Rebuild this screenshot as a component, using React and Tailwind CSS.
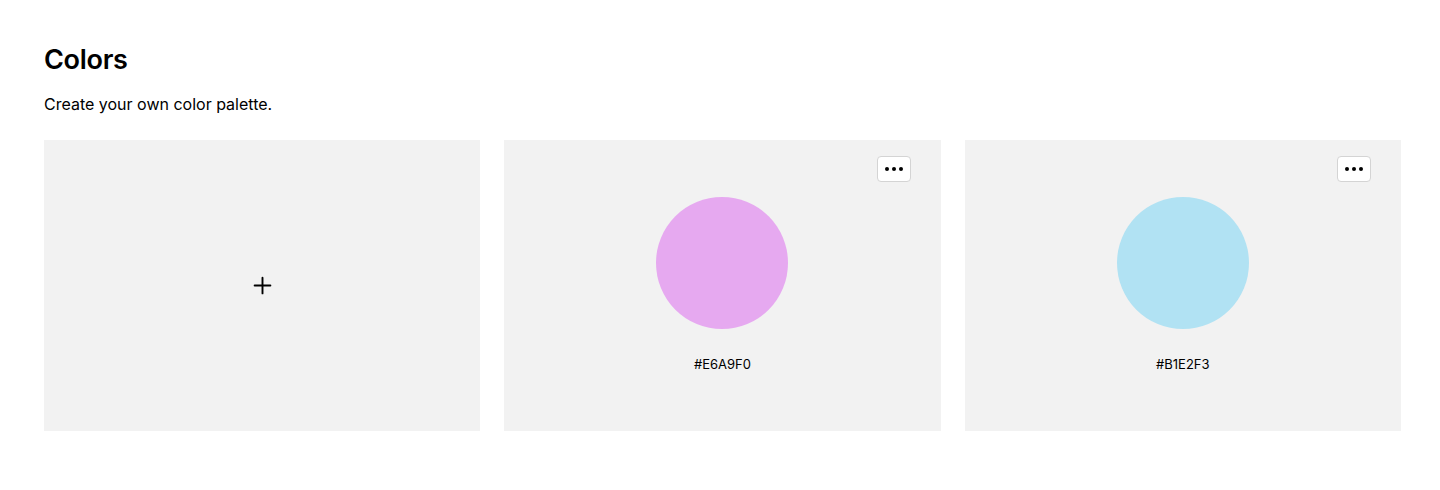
import { Plus } from 'lucide-react'

const swatches = [
  { hex: '#E6A9F0', bg: 'bg-[#e6a9f0]' },
  { hex: '#B1E2F3', bg: 'bg-[#b1e2f3]' },
]

function MoreButton() {
  return (
    <button className="absolute top-4 right-[30px] w-[34px] h-[26px] rounded-[4px] bg-white border border-[#d4d4d4] flex items-center justify-center gap-[3px]">
      <span className="w-[4px] h-[4px] rounded-full bg-black" />
      <span className="w-[4px] h-[4px] rounded-full bg-black" />
      <span className="w-[4px] h-[4px] rounded-full bg-black" />
    </button>
  )
}

export default function App() {
  return (
    <div className="min-h-[490px] bg-white pl-11 pr-[39px] pt-[44px] font-['Inter',sans-serif] text-black">
      <h1 className="text-[27px] leading-[32px] font-semibold tracking-[-0.3px]">Colors</h1>
      <p className="mt-[18px] text-[16px] leading-[20px]">Create your own color palette.</p>

      <div className="mt-[26px] grid grid-cols-3 gap-6">
        {/* add new */}
        <button className="h-[291px] bg-[#f2f2f2] flex items-center justify-center">
          <Plus className="w-[27px] h-[27px]" strokeWidth={1.7} />
        </button>

        {swatches.map(s => (
          <div key={s.hex} className="relative h-[291px] bg-[#f2f2f2] flex flex-col items-center pt-[57px]">
            <MoreButton />
            <div className={`w-[132px] h-[132px] rounded-full ${s.bg}`} />
            <div className="mt-[27px] text-[13px] leading-[16px]">{s.hex}</div>
          </div>
        ))}
      </div>
    </div>
  )
}
